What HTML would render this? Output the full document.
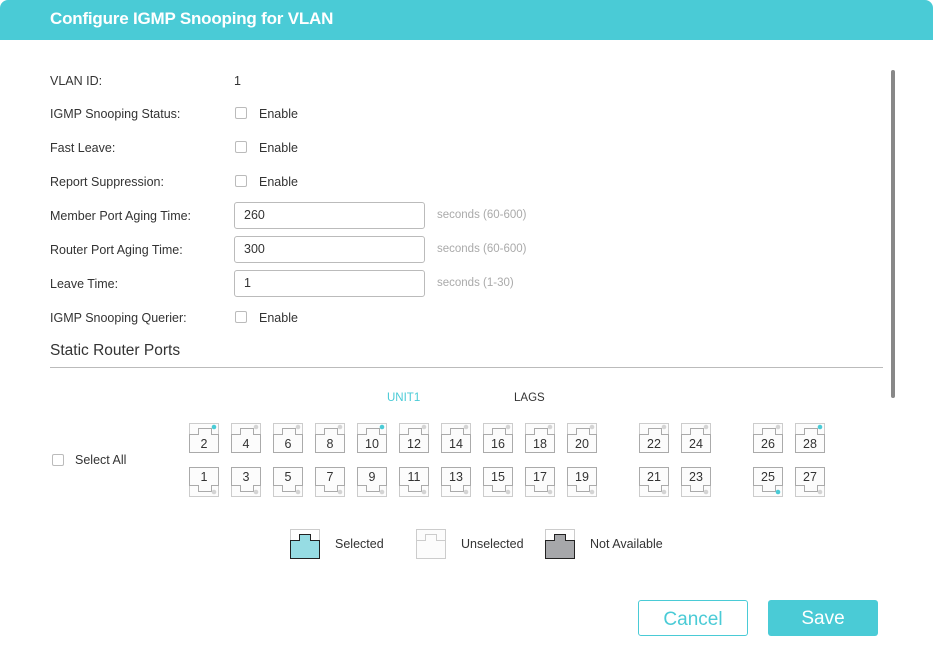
<!DOCTYPE html>
<html><head><style>
body{margin:0;width:933px;height:651px;background:#fff;font-family:"Liberation Sans",sans-serif;position:relative;overflow:hidden;color:#333}
.hd{position:absolute;left:0;top:0;width:933px;height:40px;background:#4acbd6;border-radius:8px 8px 0 0;color:#fff;font-size:17px;font-weight:bold;line-height:38px;padding-left:50px;box-sizing:border-box;letter-spacing:-0.2px}
.l{position:absolute;left:50px;font-size:12.5px;color:#333}
.cb{position:absolute;width:12px;height:12px;border:1px solid #bbb;border-radius:2px;box-sizing:border-box}
.en{position:absolute;font-size:12.5px;color:#333}
.in{position:absolute;left:234px;width:191px;height:27px;border:1px solid #bbb;border-radius:3px;box-sizing:border-box;font-size:12.5px;line-height:25px;padding-left:9px}
.hint{position:absolute;left:437px;font-size:11.5px;color:#aaa}
.btn{position:absolute;top:600px;width:110px;height:36px;border-radius:3px;box-sizing:border-box;font-size:19px;text-align:center;line-height:37px}
</style></head><body>
<div class="hd">Configure IGMP Snooping for VLAN</div>
<div style="position:absolute;left:891px;top:70px;width:4px;height:328px;background:#888;border-radius:2px"></div>

<div class="l" style="top:74px">VLAN ID:</div><div class="en" style="left:234px;top:74px">1</div>
<div class="l" style="top:107px">IGMP Snooping Status:</div><div class="cb" style="left:235px;top:107px"></div><div class="en" style="left:259px;top:107px">Enable</div>
<div class="l" style="top:141px">Fast Leave:</div><div class="cb" style="left:235px;top:141px"></div><div class="en" style="left:259px;top:141px">Enable</div>
<div class="l" style="top:175px">Report Suppression:</div><div class="cb" style="left:235px;top:175px"></div><div class="en" style="left:259px;top:175px">Enable</div>
<div class="l" style="top:209px">Member Port Aging Time:</div><div class="in" style="top:202px">260</div><div class="hint" style="top:209px">seconds (60-600)</div>
<div class="l" style="top:243px">Router Port Aging Time:</div><div class="in" style="top:236px">300</div><div class="hint" style="top:243px">seconds (60-600)</div>
<div class="l" style="top:277px">Leave Time:</div><div class="in" style="top:270px">1</div><div class="hint" style="top:277px">seconds (1-30)</div>
<div class="l" style="top:311px">IGMP Snooping Querier:</div><div class="cb" style="left:235px;top:311px"></div><div class="en" style="left:259px;top:311px">Enable</div>
<div class="l" style="top:342px;font-size:15.5px">Static Router Ports</div>
<div style="position:absolute;left:50px;top:367px;width:833px;height:1px;background:#bbb"></div>

<div style="position:absolute;left:387px;top:392px;font-size:11.5px;color:#4acbd6">UNIT1</div>
<div style="position:absolute;left:514px;top:392px;font-size:11.5px;color:#333">LAGS</div>
<div class="cb" style="left:52px;top:454px"></div><div class="en" style="left:75px;top:453px">Select All</div>

<svg style="position:absolute;left:0;top:0" width="933" height="651">
<g id="g"></g>
<g transform="translate(290,529)"><path d="M0.5 0.5H29.5V29.5H0.5Z" fill="none" stroke="#ccc"/><path d="M0.5 29.5V11.5H9.5V5.5H20.5V11.5H29.5V29.5Z" fill="#96dce3" stroke="#222"/></g>
<g transform="translate(416,529)"><path d="M0.5 0.5H29.5V29.5H0.5Z" fill="#fcfcfc" stroke="#ccc"/><path d="M0.5 11.5H9.5V5.5H20.5V11.5H29.5" fill="none" stroke="#ccc"/></g>
<g transform="translate(545,529)"><path d="M0.5 0.5H29.5V29.5H0.5Z" fill="none" stroke="#ccc"/><path d="M0.5 29.5V11.5H9.5V5.5H20.5V11.5H29.5V29.5Z" fill="#a6a7aa" stroke="#222"/></g>
<text x="335" y="548" font-size="12.5" fill="#333" font-family="Liberation Sans">Selected</text>
<text x="461" y="548" font-size="12.5" fill="#333" font-family="Liberation Sans">Unselected</text>
<text x="590" y="548" font-size="12.5" fill="#333" font-family="Liberation Sans">Not Available</text>
</svg>
<div class="btn" style="left:638px;border:1px solid #4acbd6;color:#4acbd6">Cancel</div>
<div class="btn" style="left:768px;background:#4acbd6;color:#fff">Save</div>
<script>
var xs=[];for(var i=0;i<10;i++)xs.push(189+42*i);xs.push(639,681,753,795);
var g=document.getElementById('g'),s='';
var sel={2:1,10:1,28:1,25:1};
xs.forEach(function(x,i){
 [0,1].forEach(function(r){
  var n=(i*2)+(r?1:2);var y=r?467:423;
  var dot=sel[n]?'#4acbd6':'#d4d4d4';
  if(!r){
   s+='<g transform="translate('+x+','+y+')"><path d="M0.5 0.5H29.5V29.5H0.5Z" fill="#fcfcfc" stroke="#ccc"/><path d="M0.5 29.5V11.5H9.5V5.5H22.5V11.5H29.5V29.5Z" fill="#fcfcfc" stroke="#aaa"/><circle cx="25" cy="4" r="2.3" fill="'+dot+'"/><text x="15" y="25" text-anchor="middle" font-size="12.5" fill="#333" font-family="Liberation Sans">'+n+'</text></g>';
  }else{
   s+='<g transform="translate('+x+','+y+')"><path d="M0.5 0.5H29.5V29.5H0.5Z" fill="#fcfcfc" stroke="#ccc"/><path d="M0.5 0.5V18.5H9.5V24.5H22.5V18.5H29.5V0.5Z" fill="#fcfcfc" stroke="#aaa"/><circle cx="25" cy="25" r="2.3" fill="'+dot+'"/><text x="15" y="14" text-anchor="middle" font-size="12.5" fill="#333" font-family="Liberation Sans">'+n+'</text></g>';
  }
 });
});
g.innerHTML=s;
</script>
</body></html>
